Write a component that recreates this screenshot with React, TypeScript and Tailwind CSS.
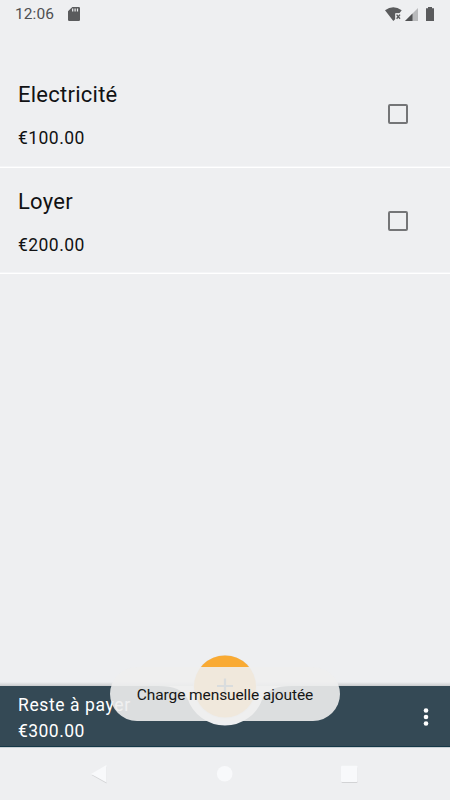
import React from "react";

type Charge = { name: string; amount: string };

const charges: Charge[] = [
  { name: "Electricité", amount: "€100.00" },
  { name: "Loyer", amount: "€200.00" },
];

function StatusBar() {
  return (
    <header className="flex h-7 shrink-0 items-center justify-between pl-[15px] pr-[15px] text-[#4f5052]">
      <div className="flex items-center">
        <span className="w-[53px] text-[15.5px] leading-7 tracking-[0.1px] whitespace-nowrap">12:06</span>
        <svg width="12" height="14" viewBox="0 0 12 14" className="-mt-px">
          <path d="M4.3 0H10.8Q12 0 12 1.2V12.8Q12 14 10.8 14H1.2Q0 14 0 12.8V4.3Z" fill="#5a5b5d" />
          <path d="M4.7 1.6V4.4M7.1 1.6V4.4M9.5 1.6V4.4" stroke="#eeeff1" strokeWidth="1.2" />
        </svg>
      </div>
      <svg width="51" height="16" viewBox="384 5 51 16">
        <path d="M385 9.2Q393.3 3.3 401.7 9.2L399.2 12.5H395.4V18L393.3 20Z" fill="#5a5b5d" />
        <path d="M395.4 12.2H402V19H395.4Z" fill="#eeeff1" />
        <path d="M396.6 13.6L400 17.8M400 13.6L396.6 17.8" stroke="#5a5b5d" strokeWidth="1.4" />
        <path d="M418 7V20H405Z" fill="#b9babc" />
        <path d="M412.5 12.5V20H405Z" fill="#505153" />
        <path d="M428 6H432V7.3H434V20H426V7.3H428Z" fill="#5a5b5d" />
      </svg>
    </header>
  );
}

function ChargeRow({ charge, last }: { charge: Charge; last: boolean }) {
  return (
    <li className={`flex items-start justify-between border-b border-white pl-[18px] pr-[42.5px] shadow-[inset_0_-1px_0_#f4f5f7] ${last ? "h-[106px]" : "h-[107px]"}`}>
      <div className="flex flex-col pt-5">
        <span className="text-[22px] leading-[28px] tracking-[0.25px]">{charge.name}</span>
        <span className="mt-[17px] text-[17.5px] leading-[24px] tracking-[0.45px]">{charge.amount}</span>
      </div>
      <span role="checkbox" aria-checked="false" className="mt-[43px] h-5 w-5 rounded-[2px] border-2 border-[#747577]" />
    </li>
  );
}

function BottomBar() {
  return (
    <section className="relative h-[61px] shrink-0">
      <svg className="absolute inset-x-0 -top-[34px]" width="450" height="95" viewBox="0 652 450 95">
        <defs>
          <linearGradient id="edge" x1="0" y1="0" x2="0" y2="1">
            <stop offset="0" stopColor="#eeeff1" />
            <stop offset="1" stopColor="#c9cbcd" />
          </linearGradient>
        </defs>
        <path d="M0 682H450V686H0Z" fill="url(#edge)" />
        <path d="M0 686H158C175 686 182 690 187.5 698.5A39.5 39.5 0 0 0 262.5 698.5C268 690 275 686 292 686H450V747H0Z" fill="#344955" />
        <path d="M0 746.5H450" stroke="#153747" />
        <circle cx="225" cy="687" r="31.7" fill="#dedfe0" />
        <circle cx="225" cy="686.5" r="31" fill="#f9aa33" />
        <path d="M217 686H233M225 678.5V694" stroke="#1c3440" strokeWidth="2.2" />
      </svg>
      <div className="relative flex h-full items-center justify-between pl-[18px] pr-[21px] text-white">
        <div className="flex flex-col pt-[2px] text-[17.5px] leading-[26px] tracking-[0.45px]">
          <span className="tracking-[0.6px]">Reste à payer</span>
          <span>€300.00</span>
        </div>
        <svg width="6" height="20" viewBox="0 0 6 20" fill="white">
          <circle cx="3" cy="3.5" r="2.3" />
          <circle cx="3" cy="10" r="2.3" />
          <circle cx="3" cy="16.5" r="2.3" />
        </svg>
      </div>
      <div role="status" className="absolute -top-[19px] left-[110px] flex h-[54px] w-[230px] items-center justify-center rounded-[27px] bg-[#eeeeee]/90 pt-[2px] text-[15.5px] leading-6 tracking-[-0.1px] text-[#161616] whitespace-nowrap">
        Charge mensuelle ajoutée
      </div>
    </section>
  );
}

function NavigationBar() {
  return (
    <nav className="flex h-[53px] shrink-0 items-start border-t border-[#c9d0d4] bg-[#eeeff1]">
      <svg width="450" height="52" viewBox="0 748 450 52">
        <g fill="#d2d3d5">
          <path d="M91.5 775L106.5 766.5V783.5Z" />
          <rect x="341.5" y="767" width="16" height="16" rx="1" />
        </g>
        <g fill="#f8f9fb">
          <path d="M91 774L106.5 765V782.5Z" />
          <circle cx="224.7" cy="773.7" r="7.8" />
          <rect x="341" y="765.7" width="16.5" height="16.3" rx="1" />
        </g>
      </svg>
    </nav>
  );
}

export default function App() {
  return (
    <div className="flex h-[800px] w-[450px] flex-col overflow-hidden bg-[#eeeff1] font-['Roboto',sans-serif] text-[#111214]">
      <StatusBar />
      <main className="flex-1 pt-[33px]">
        <ul>
          {charges.map((charge, i) => (
            <ChargeRow key={charge.name} charge={charge} last={i === charges.length - 1} />
          ))}
        </ul>
      </main>
      <BottomBar />
      <NavigationBar />
    </div>
  );
}
